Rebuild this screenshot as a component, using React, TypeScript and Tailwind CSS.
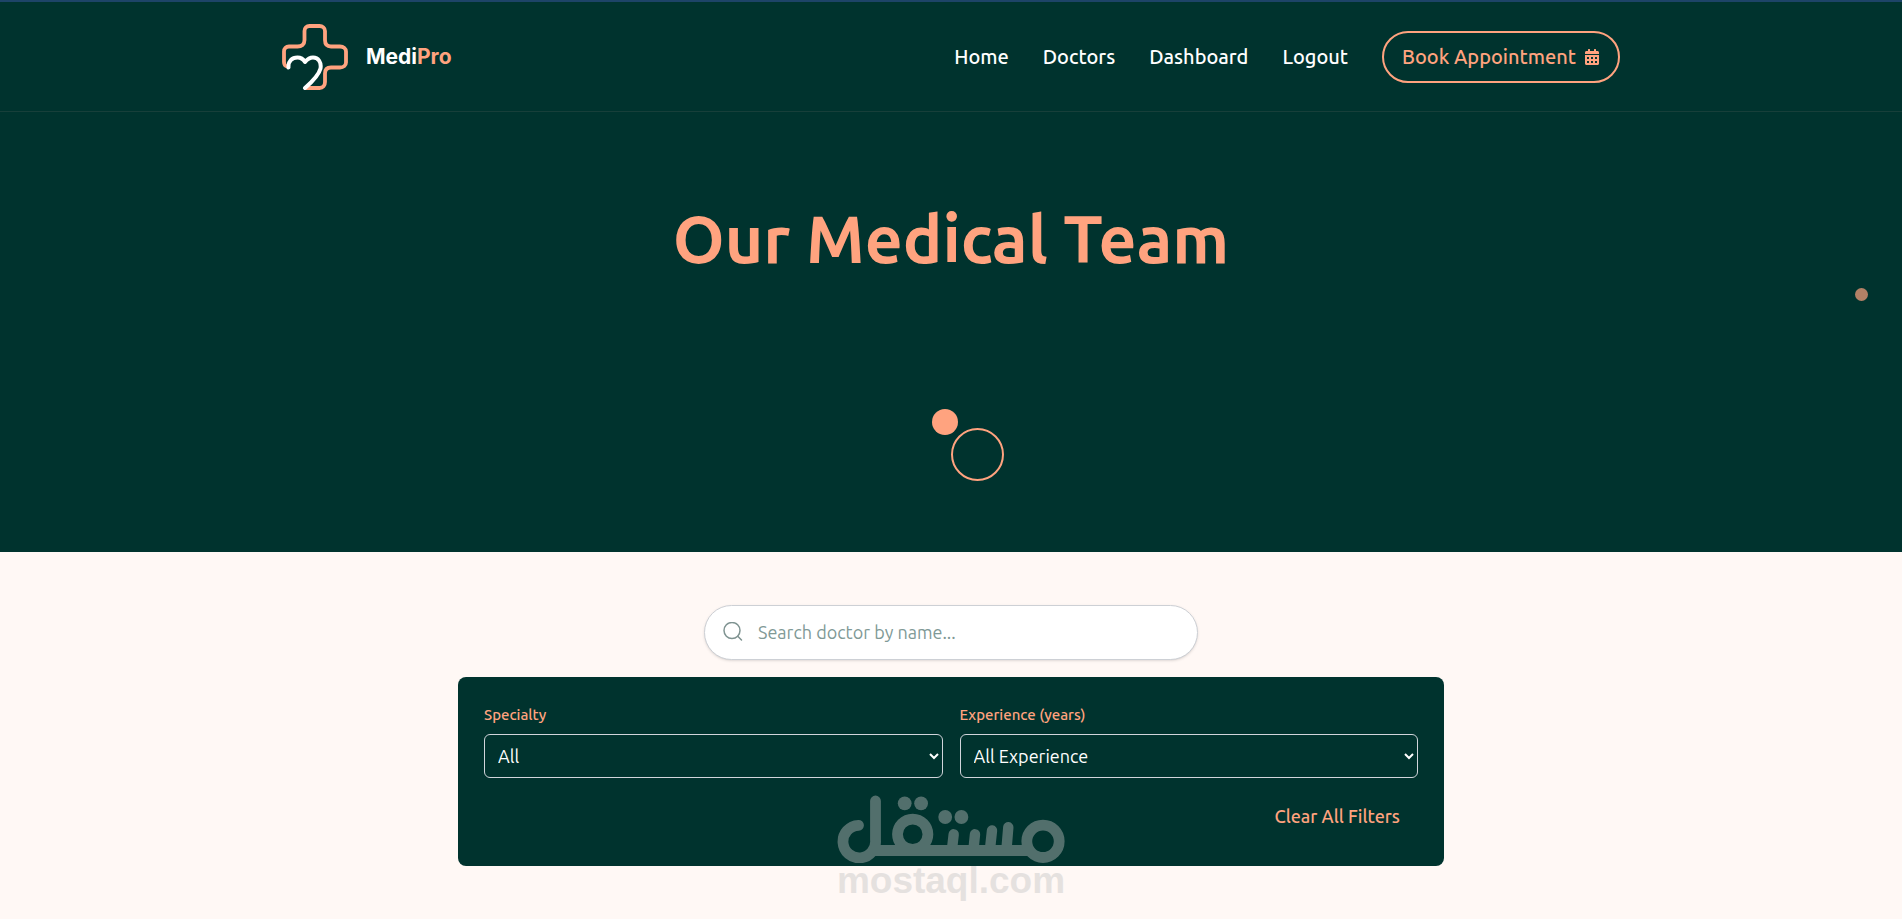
import { FaCalendarAlt } from "react-icons/fa";

function BrandMark() {
  return (
    <svg className="size-[66px]" viewBox="0 0 66 66" fill="none" strokeLinecap="round" strokeLinejoin="round" aria-hidden="true">
      <path
        d="M5.5 42.8C3 42 2 40.5 2 38V27.500C2 24.500 4 22.500 7 22.500H15.500C19.500 22.500 22.500 20.500 22.500 16V7C22.500 4 24.500 2 27.500 2H37.500C40.500 2 43 4 43 7V16C43 20.500 45 22.500 49 22.500H58C61.500 22.500 64 24.500 64 27.500V38.500C64 41.500 61.500 43.500 58 43.500H49C45 43.500 43 45.500 43 49.500V58C43 61.500 41 64 37.500 64H24"
        stroke="#FFA37F"
        strokeWidth="3.8"
      />
      <path
        d="M6.500 43.500C6 37 10 33.500 15.500 33.500C19 33.500 21.500 35.500 23 38C25.500 35 28.500 33.500 31 33.500C36.500 33.500 39.500 38.500 38.500 44.500C37 50.500 30.500 57.500 23 64"
        stroke="#FFFFFF"
        strokeWidth="4"
      />
    </svg>
  );
}

function Watermark() {
  return (
    <div className="pointer-events-none absolute left-1/2 top-[118px] flex w-[230px] -translate-x-1/2 flex-col items-center text-[#c3c3c3] opacity-[.42]">
      <svg className="h-[68px] w-[230px]" viewBox="16 15 230 68" fill="none" stroke="currentColor" strokeWidth="10.800" strokeLinecap="round" aria-hidden="true">
        <path d="M38.500 45.300A16.300 16.300 0 1 0 55.500 60V21" />
        <path d="M50 70.500H211" strokeLinecap="butt" />
        <circle cx="92.700" cy="54.300" r="15.200" />
        <circle cx="223" cy="61.300" r="16.200" />
        <path d="M133.700 54.300L132 69M155 54.300L153.500 69M172 50.500L170 69M188.300 47.300L186.500 69" strokeWidth="10.400" />
        <g fill="currentColor" stroke="none">
          <circle cx="84.700" cy="23.300" r="6.900" />
          <circle cx="101.100" cy="23.300" r="6.900" />
          <circle cx="125.200" cy="37" r="6.900" />
          <circle cx="141.400" cy="37" r="6.900" />
        </g>
      </svg>
      <span className="font-['Liberation_Sans',sans-serif] text-[37px] leading-9 font-bold">mostaql.com</span>
    </div>
  );
}

const links = ["Home", "Doctors", "Dashboard", "Logout"];

const filters = [
  { id: "specialty", label: "Specialty", options: ["All", "Cardiology", "Dermatology", "Neurology", "Pediatrics"] },
  { id: "experience", label: "Experience (years)", options: ["All Experience", "0-5", "5-10", "10+"] },
];

export default function App() {
  return (
    <div className="flex min-h-screen flex-col bg-[#FFF8F5] font-['Ubuntu','Noto_Sans',sans-serif]">
      <header className="border-t-2 border-b border-t-[#1d4468] border-b-[#173f3a] bg-[#00332E]">
        <nav className="mx-auto flex h-[109px] w-full max-w-[1402px] items-center justify-between px-8">
          <a href="#home" className="flex items-center gap-[18px]">
            <BrandMark />
            <span className="font-['Inter',sans-serif] text-[21px] font-bold text-white">
              Medi<span className="text-[#FFA37F]">Pro</span>
            </span>
          </a>
          <div className="flex items-center gap-[34px]">
            {links.map((link) => (
              <a key={link} href={`#${link.toLowerCase()}`} className="text-xl font-medium text-white">
                {link}
              </a>
            ))}
            <button type="button" className="flex h-[52px] items-center gap-2 rounded-full border-2 border-[#FFA37F] px-[18px] text-xl font-medium text-[#FFA37F]">
              Book Appointment
              <FaCalendarAlt className="size-4" />
            </button>
          </div>
        </nav>
      </header>

      <section className="relative h-[440px] bg-[#00332E] pt-20">
        <h1 className="text-center text-[66px] leading-[92px] font-semibold text-[#FFA37F]">Our Medical Team</h1>
        <span className="absolute top-[297px] left-1/2 -ml-[19px] size-[26px] rounded-full bg-[#FFA37F]" />
        <span className="absolute top-[316px] left-1/2 size-[53px] rounded-full border-2 border-[#FFA37F]" />
        <span className="absolute top-[176px] right-[34px] size-[13px] rounded-full bg-[#FFA37F] opacity-70" />
      </section>

      <main className="mx-auto flex w-full max-w-[986px] flex-col items-center gap-[17px] pt-[53px] pb-[53px]">
        <label className="flex h-[55px] w-full max-w-[494px] items-center gap-[15px] rounded-full border border-[#cdd0d5] bg-white px-[18px] pb-[2px] shadow-sm">
          <svg className="size-5 shrink-0" viewBox="0 0 20 20" fill="none" stroke="#7f9391" strokeWidth="1.500" strokeLinecap="round" aria-hidden="true">
            <circle cx="9" cy="8.500" r="8" />
            <path d="M14.800 14.300L18.500 18" />
          </svg>
          <input
            type="text"
            aria-label="Search doctor by name"
            placeholder="Search doctor by name..."
            className="w-full bg-transparent text-lg leading-6 text-[#00332E] outline-none placeholder:text-[#809996]"
          />
        </label>

        <section className="relative w-full rounded-lg bg-[#00332E] p-[26px]">
          <div className="grid grid-cols-2 gap-[17px]">
            {filters.map((filter) => (
              <div key={filter.id} className="flex flex-col gap-2">
                <label htmlFor={filter.id} className="text-[15px] leading-[23px] font-medium text-[#FFA37F]">
                  {filter.label}
                </label>
                <select id={filter.id} className="h-11 w-full rounded-md border border-[#d1d5db] bg-[#00332E] px-[9px] text-lg text-white">
                  {filter.options.map((option) => (
                    <option key={option}>{option}</option>
                  ))}
                </select>
              </div>
            ))}
          </div>
          <div className="mt-4 flex justify-end">
            <button type="button" className="mb-[3px] h-[43px] px-[18px] text-lg font-medium text-[#FFA37F]">
              Clear All Filters
            </button>
          </div>
          <Watermark />
        </section>
      </main>
    </div>
  );
}
